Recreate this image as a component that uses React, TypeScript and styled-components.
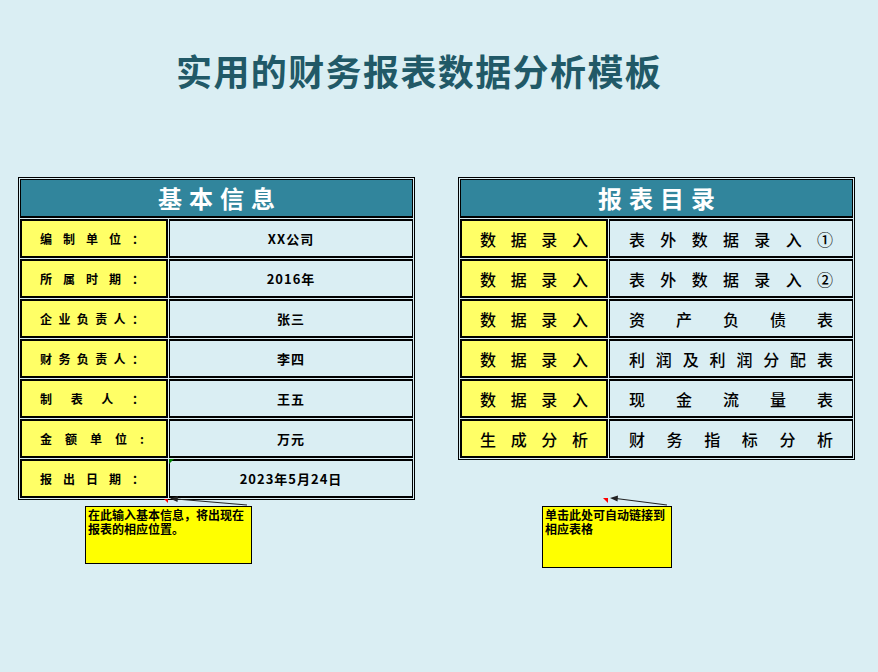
import React from "react";
import styled, { createGlobalStyle } from "styled-components";

const Global = createGlobalStyle`
  html, body { margin: 0; padding: 0; background: #DAEEF3; }
  #root { width: 878px; height: 672px; }
  * { box-sizing: border-box; }
`;

const FONT = `"Noto Sans CJK SC", "Noto Sans", sans-serif`;

const Page = styled.div`
  position: relative;
  width: 878px;
  height: 672px;
  overflow: hidden;
  background: #daeef3;
  padding-top: 52px;
  font-family: ${FONT};
`;

const Title = styled.h1`
  margin: 0 0 0 176px;
  font: 700 36px/36px ${FONT};
  letter-spacing: 1.4px;
  color: #215967;
  white-space: nowrap;
`;

const Tables = styled.div`
  display: flex;
  align-items: flex-start;
  gap: 43px;
  margin-top: 89px;
  padding-left: 18px;
`;

const Table = styled.div`
  width: 397px;
  border: 1px solid #000;
  padding: 1px;
  display: grid;
  grid-template-columns: 148px 1fr;
  grid-auto-rows: 39px;
  gap: 1px;
`;

const Header = styled.div`
  grid-column: 1 / -1;
  background: #31859c;
  border: 1px solid #000;
  border-bottom-width: 2px;
  color: #fff;
  font: 700 24px/1 ${FONT};
  letter-spacing: 7px;
  padding-left: 7px;
  display: flex;
  align-items: center;
  justify-content: center;
`;

const Cell = styled.div<{ $pl: number; $pr: number; $size: number; $weight: number; $center?: boolean }>`
  display: flex;
  align-items: center;
  justify-content: ${(p) => (p.$center ? "center" : "space-between")};
  padding: 0 ${(p) => p.$pr}px 0 ${(p) => p.$pl}px;
  font: ${(p) => p.$weight} ${(p) => p.$size}px/1 ${FONT};
  color: #000;
  white-space: nowrap;
`;

const LabelCell = styled(Cell)`
  background: #ffff66;
  border: 2px solid #000;
`;

const ValueCell = styled(Cell)`
  background: #daeef3;
  border: 1px solid #000;
  border-top-width: 2px;
  border-bottom-width: 2px;
  letter-spacing: ${(p) => (p.$center ? "1px" : "0")};
`;

const Comment = styled.div<{ $left: number; $top: number; $w: number; $h: number }>`
  position: absolute;
  left: ${(p) => p.$left}px;
  top: ${(p) => p.$top}px;
  width: ${(p) => p.$w}px;
  height: ${(p) => p.$h}px;
  background: #ffff00;
  border: 1px solid #000;
  padding: 1px 2px;
  font: 700 12px/14px ${FONT};
  color: #000;
  word-break: break-all;
`;

const Overlay = styled.svg`
  position: absolute;
  left: 0;
  top: 0;
  pointer-events: none;
`;

const Spread = ({ text }: { text: string[] }) => (
  <>
    {text.map((c, i) => (
      <span key={i}>{c}</span>
    ))}
  </>
);

const basic: [string[], string][] = [
  [["编", "制", "单", "位", "："], "XX公司"],
  [["所", "属", "时", "期", "："], "2016年"],
  [["企", "业", "负", "责", "人", "："], "张三"],
  [["财", "务", "负", "责", "人", "："], "李四"],
  [["制", "表", "人", "："], "王五"],
  [["金", "额", "单", "位", ":"], "万元"],
  [["报", "出", "日", "期", "："], "2023年5月24日"],
];

const reports: [string, string][] = [
  ["数据录入", "表外数据录入①"],
  ["数据录入", "表外数据录入②"],
  ["数据录入", "资产负债表"],
  ["数据录入", "利润及利润分配表"],
  ["数据录入", "现金流量表"],
  ["生成分析", "财务指标分析"],
];

export default function App() {
  return (
    <Page>
      <Global />
      <Title>实用的财务报表数据分析模板</Title>
      <Tables>
        <Table>
          <Header>基本信息</Header>
          {basic.map(([label, value], i) => (
            <React.Fragment key={i}>
              <LabelCell $pl={18} $pr={22} $size={12} $weight={700}>
                <Spread text={label} />
              </LabelCell>
              <ValueCell $pl={0} $pr={0} $size={13} $weight={700} $center>
                {value}
              </ValueCell>
            </React.Fragment>
          ))}
        </Table>
        <Table>
          <Header>报表目录</Header>
          {reports.map(([label, value], i) => (
            <React.Fragment key={i}>
              <LabelCell $pl={18} $pr={18} $size={16} $weight={500}>
                <Spread text={Array.from(label)} />
              </LabelCell>
              <ValueCell $pl={19} $pr={19} $size={16} $weight={500}>
                <Spread text={Array.from(value)} />
              </ValueCell>
            </React.Fragment>
          ))}
        </Table>
      </Tables>

      <Comment $left={85} $top={506} $w={167} $h={58}>
        在此输入基本信息，将出现在报表的相应位置。
      </Comment>
      <Comment $left={542} $top={506} $w={130} $h={62}>
        单击此处可自动链接到相应表格
      </Comment>

      <Overlay width={878} height={672} viewBox="0 0 878 672">
        <polygon points="169,459 174,459 169,464" fill="#008000" />
        <polygon points="164,499 168,499 168,503" fill="#ff0000" />
        <polygon points="603,498 608,498 608,503" fill="#ff0000" />
        <line x1={247} y1={505} x2={176} y2={499} stroke="#222" strokeWidth={1.2} />
        <polygon points="170,498.5 178,496 177.5,502" fill="#222" />
        <line x1={667} y1={505} x2={616} y2={498.5} stroke="#222" strokeWidth={1.2} />
        <polygon points="610,498 618,495.5 617.5,501.5" fill="#222" />
      </Overlay>
    </Page>
  );
}
